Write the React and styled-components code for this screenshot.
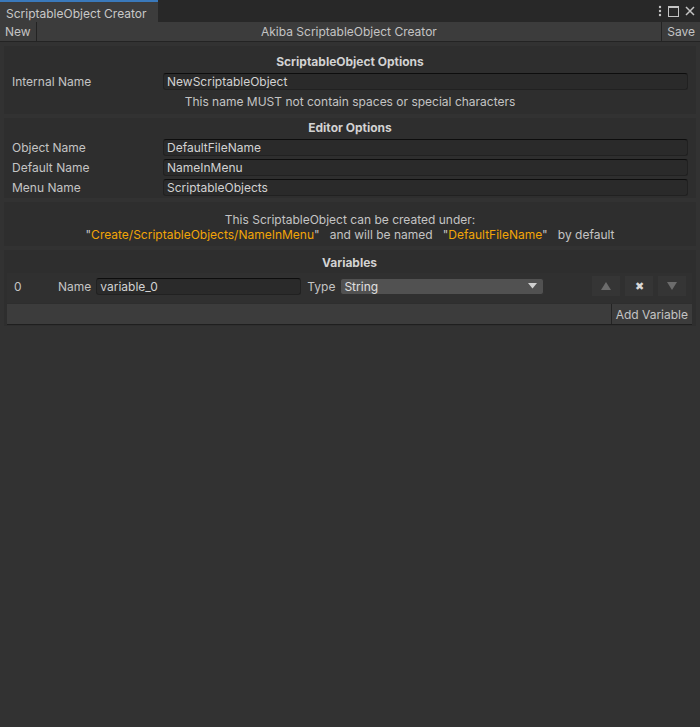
import React from 'react';
import styled, { createGlobalStyle } from 'styled-components';

const GlobalStyle = createGlobalStyle`
  html, body {
    margin: 0;
    padding: 0;
    background: #323232;
  }
  body {
    font-family: Inter, "Noto Sans", sans-serif;
    font-size: 12px;
    color: #c4c4c4;
  }
`;

const Window = styled.div`
  width: 700px;
  height: 727px;
  display: flex;
  flex-direction: column;
  background: #323232;
  overflow: hidden;
`;

const TabBar = styled.div`
  height: 22px;
  display: flex;
  align-items: stretch;
  background: #282828;
`;

const Tab = styled.div`
  width: 158px;
  box-sizing: border-box;
  padding: 4px 0 0 6px;
  background: #3c3c3c;
  border-top: 2px solid #3a79bb;
  color: #c8c8c8;
  font-size: 12px;
`;

const TabIcons = styled.div`
  margin-left: auto;
  display: flex;
  align-items: center;
  gap: 6px;
  padding-right: 5px;
  color: #c4c4c4;
`;

const Toolbar = styled.div`
  height: 19px;
  display: flex;
  align-items: center;
  background: #3c3c3c;
  border-bottom: 1px solid #232323;
`;

const ToolButton = styled.div`
  height: 100%;
  display: flex;
  align-items: center;
  padding: 0 5px;
  color: #c4c4c4;
  ${p => p.$side === 'left' ? 'border-right: 1px solid #232323;' : 'border-left: 1px solid #232323;'}
`;

const ToolTitle = styled.div`
  flex: 1;
  text-align: center;
  color: #c4c4c4;
`;

const Body = styled.div`
  display: flex;
  flex-direction: column;
  gap: 4px;
  padding: 4px 4px 0 4px;
`;

const Section = styled.div`
  display: flex;
  flex-direction: column;
  background: #2e2e2e;
  padding: ${p => p.$pad || '6px 8px'};
  gap: ${p => p.$gap || '2px'};
`;

const Header = styled.div`
  text-align: center;
  font-weight: 700;
  color: #d2d2d2;
  height: 16px;
  line-height: 16px;
`;

const FieldRow = styled.div`
  display: flex;
  align-items: center;
  height: 18px;
`;

const Label = styled.div`
  width: 151px;
  color: #c4c4c4;
`;

const Input = styled.div`
  flex: ${p => (p.$width ? 'none' : 1)};
  width: ${p => (p.$width ? p.$width + 'px' : 'auto')};
  height: 17px;
  box-sizing: border-box;
  background: #2a2a2a;
  border: 1px solid #212121;
  border-top-color: #0d0d0d;
  border-radius: 3px;
  padding: 0 3px;
  line-height: 15px;
  color: #d2d2d2;
`;

const Help = styled.div`
  text-align: center;
  height: 16px;
  line-height: 16px;
  margin-top: 2px;
  color: #c4c4c4;
`;

const Info = styled.div`
  text-align: center;
  line-height: 15px;
  color: #c4c4c4;
  white-space: pre;
`;

const Path = styled.span`
  color: #f2a507;
`;

const VarRow = styled.div`
  display: flex;
  align-items: center;
  height: 30px;
  box-sizing: border-box;
  background: #303030;
  padding: 0 6px 4px 7px;
`;

const Index = styled.div`
  width: 44px;
`;

const InlineLabel = styled.div`
  margin-left: ${p => p.$before || 0}px;
  margin-right: ${p => p.$after || 5}px;
`;

const Select = styled.div`
  width: 204px;
  height: 17px;
  box-sizing: border-box;
  background: #515151;
  border: 1px solid #303030;
  border-radius: 3px;
  display: flex;
  align-items: center;
  justify-content: space-between;
  padding: 0 6px 0 3px;
  color: #e0e0e0;
`;

const IconButtons = styled.div`
  margin-left: auto;
  display: flex;
  gap: 5px;
`;

const IconButton = styled.div`
  width: 28px;
  height: 20px;
  display: flex;
  align-items: center;
  justify-content: center;
  background: #353535;
  color: ${p => (p.$dim ? '#6c6c6c' : '#d8d8d8')};
  font-size: 11px;
`;

const AddBar = styled.div`
  display: flex;
  justify-content: flex-end;
  height: 20px;
  margin-top: 1px;
  background: #3c3c3c;
  border-bottom: 1px solid #1f1f1f;
`;

const AddButton = styled.div`
  display: flex;
  align-items: center;
  padding: 0 4px;
  border-left: 1px solid #232323;
  color: #c4c4c4;
`;

const Tri = ({ up }) => (
  <svg width="12" height="10" viewBox="0 0 12 10">
    <path d={up ? 'M6 1 L11 9 L1 9 Z' : 'M1 1 L11 1 L6 9 Z'} fill="currentColor" />
  </svg>
);

export default function App() {
  return (
    <Window>
      <GlobalStyle />
      <TabBar>
        <Tab>ScriptableObject Creator</Tab>
        <TabIcons>
          <svg width="4" height="12" viewBox="0 0 4 12">
            <circle cx="2" cy="2" r="1.2" fill="currentColor" />
            <circle cx="2" cy="6" r="1.2" fill="currentColor" />
            <circle cx="2" cy="10" r="1.2" fill="currentColor" />
          </svg>
          <svg width="11" height="11" viewBox="0 0 11 11">
            <rect x="0.5" y="0.5" width="10" height="10" fill="none" stroke="currentColor" />
            <line x1="0" y1="1.5" x2="11" y2="1.5" stroke="currentColor" />
          </svg>
          <svg width="10" height="10" viewBox="0 0 10 10">
            <path d="M1 1 L9 9 M9 1 L1 9" stroke="currentColor" strokeWidth="1.5" />
          </svg>
        </TabIcons>
      </TabBar>
      <Toolbar>
        <ToolButton $side="left">New</ToolButton>
        <ToolTitle>Akiba ScriptableObject Creator</ToolTitle>
        <ToolButton $side="right">Save</ToolButton>
      </Toolbar>
      <Body>
        <Section $pad="8px 8px 4px 8px" $gap="2px">
          <Header>ScriptableObject Options</Header>
          <FieldRow>
            <Label>Internal Name</Label>
            <Input>NewScriptableObject</Input>
          </FieldRow>
          <Help>This name MUST not contain spaces or special characters</Help>
        </Section>
        <Section $pad="2px 8px 2px 8px" $gap="2px">
          <Header>Editor Options</Header>
          <FieldRow>
            <Label>Object Name</Label>
            <Input>DefaultFileName</Input>
          </FieldRow>
          <FieldRow>
            <Label>Default Name</Label>
            <Input>NameInMenu</Input>
          </FieldRow>
          <FieldRow>
            <Label>Menu Name</Label>
            <Input>ScriptableObjects</Input>
          </FieldRow>
        </Section>
        <Section $pad="10px 8px 4px 8px" $gap="0px">
          <Info>This ScriptableObject can be created under:</Info>
          <Info>
            "<Path>Create/ScriptableObjects/NameInMenu</Path>"   and will be named   "<Path>DefaultFileName</Path>"   by default
          </Info>
        </Section>
        <Section $pad="5px 4px 1px 3px" $gap="2px">
          <Header>Variables</Header>
          <div>
            <VarRow>
              <Index>0</Index>
              <InlineLabel $after={5}>Name</InlineLabel>
              <Input $width={205}>variable_0</Input>
              <InlineLabel $before={6} $after={5}>Type</InlineLabel>
              <Select>
                String
                <svg width="9" height="6" viewBox="0 0 9 6">
                  <path d="M0 0 L9 0 L4.5 5.5 Z" fill="#d0d0d0" />
                </svg>
              </Select>
              <IconButtons>
                <IconButton $dim><Tri up /></IconButton>
                <IconButton>✖</IconButton>
                <IconButton $dim><Tri /></IconButton>
              </IconButtons>
            </VarRow>
            <AddBar>
              <AddButton>Add Variable</AddButton>
            </AddBar>
          </div>
        </Section>
      </Body>
    </Window>
  );
}
